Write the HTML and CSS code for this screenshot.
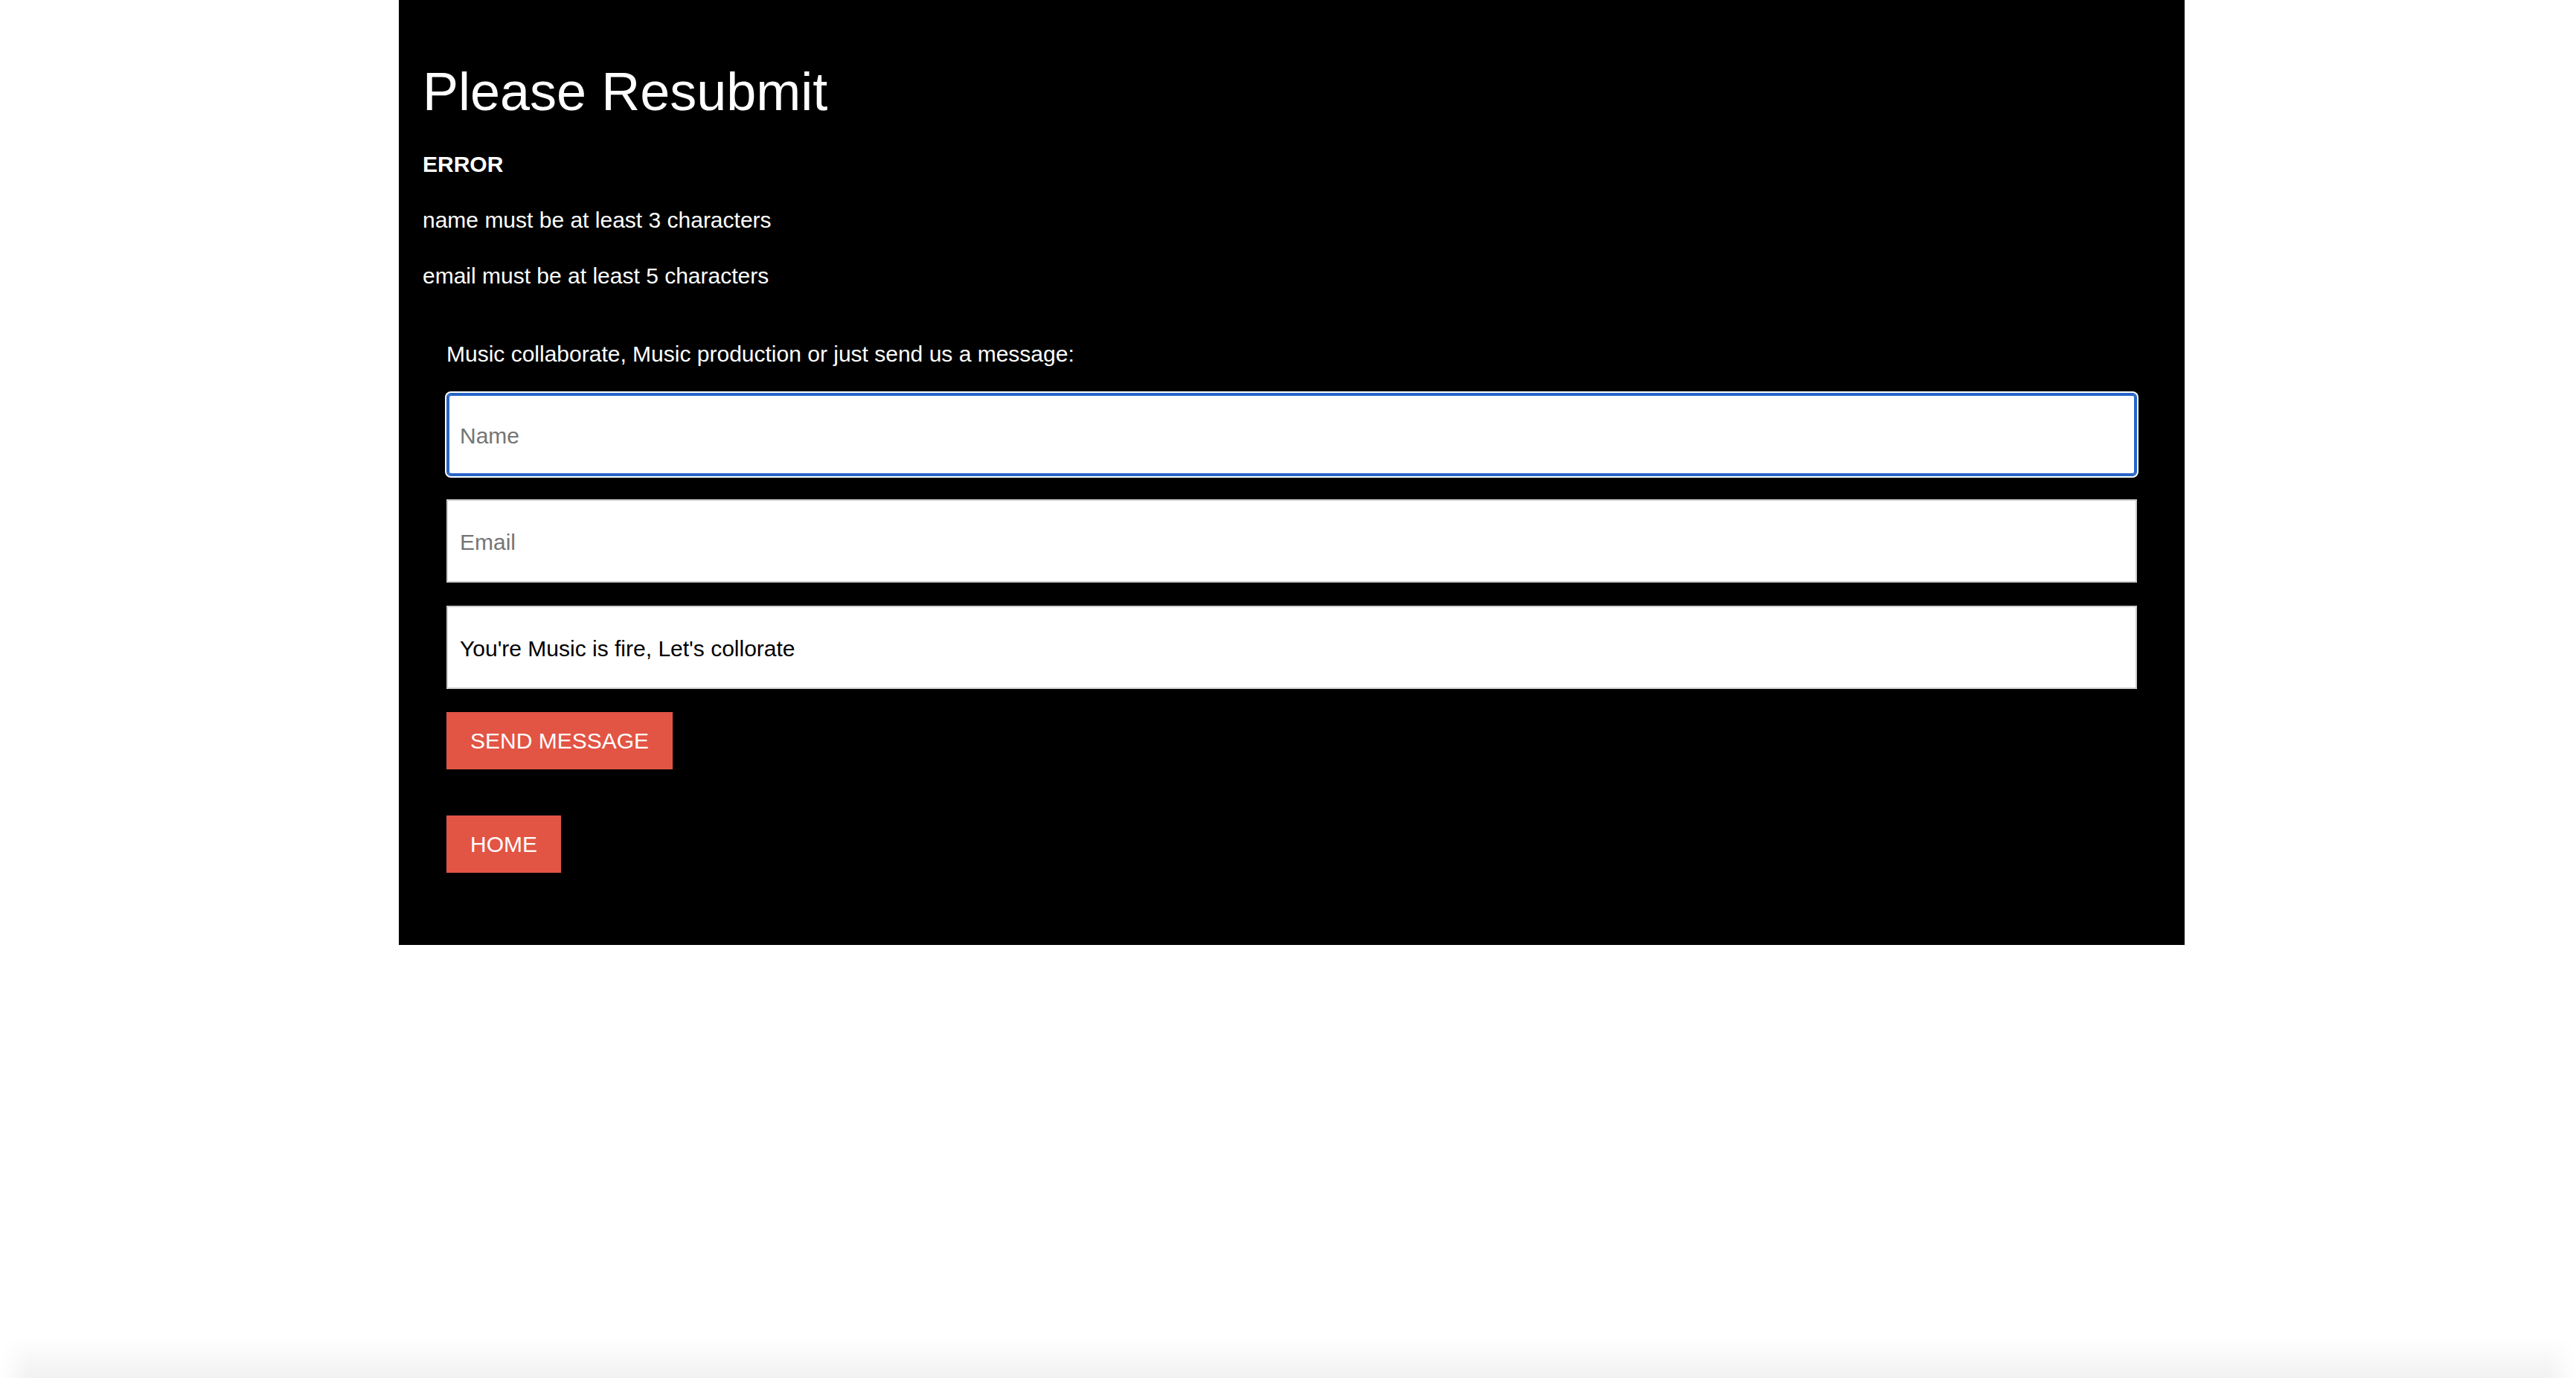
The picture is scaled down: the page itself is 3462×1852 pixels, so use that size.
FILE: index.html
```html
<!DOCTYPE html>
<html lang="en">
<head>
<meta charset="utf-8">
<title>Please Resubmit</title>
<link rel="stylesheet" href="styles.css">
</head>
<body>
<main class="panel">
  <h1 class="title">Please Resubmit</h1>
  <p class="error-title">ERROR</p>
  <p class="error-line">name must be at least 3 characters</p>
  <p class="error-line">email must be at least 5 characters</p>
  <form class="contact" action="#">
    <label class="intro" for="name">Music collaborate, Music production or just send us a message:</label>
    <input class="field field-focus" id="name" type="text" placeholder="Name">
    <input class="field" type="email" placeholder="Email">
    <input class="field" type="text" value="You're Music is fire, Let's collorate">
    <button class="btn" type="button">SEND MESSAGE</button>
    <div class="home-row"><a class="btn" href="#">HOME</a></div>
  </form>
</main>
<div class="bottom-shade"></div>
</body>
</html>
```

FILE: styles.css
```css
html, body {
  margin: 0;
  background: #ffffff;
}

body {
  padding: 0 0 0 10px;
  font-family: "Liberation Sans", Arial, Helvetica, sans-serif;
  font-size: 30px;
  line-height: 45px;
  color: #ffffff;
}

.panel {
  width: 2400px;
  box-sizing: border-box;
  margin: 0 auto;
  background: #000000;
  padding: 32px 32px 97px 32px;
}

.title {
  margin: 48px 0 32px;
  font-size: 72px;
  line-height: 86px;
  font-weight: 400;
}

.error-title {
  margin: 30px 0;
  font-weight: 700;
}

.error-line {
  margin: 30px 0;
}

.contact {
  display: flex;
  flex-direction: column;
  align-items: flex-start;
  padding: 30px 32px 0;
}

.intro {
  display: block;
  margin-bottom: 30px;
}

.field {
  display: block;
  width: 100%;
  height: 112px;
  box-sizing: border-box;
  margin: 0 0 31px;
  padding: 4px 16px 0;
  border: 2px solid #cccccc;
  border-radius: 0;
  background: #ffffff;
  font-family: "Liberation Sans", Arial, Helvetica, sans-serif;
  font-size: 30px;
  color: #000000;
  outline: none;
}

.field::placeholder {
  color: #757575;
}

.field-focus {
  border-color: #2764c8;
  border-radius: 6px;
  box-shadow: 0 0 0 2px #ffffff, inset 0 0 0 2px #2764c8;
}

.btn {
  display: inline-block;
  margin: 0;
  padding: 16px 32px;
  border: 0;
  border-radius: 0;
  background: #e25444;
  color: #ffffff;
  font-family: "Liberation Sans", Arial, Helvetica, sans-serif;
  font-size: 30px;
  line-height: 45px;
  text-decoration: none;
  cursor: pointer;
}

.home-row {
  margin-top: 62px;
}

.bottom-shade {
  position: fixed;
  left: 0;
  right: 0;
  bottom: 0;
  height: 56px;
  pointer-events: none;
  background: linear-gradient(to bottom, rgba(0, 0, 0, 0), rgba(0, 0, 0, 0.055));
  -webkit-mask-image: linear-gradient(to right, transparent 0, #000 40px, #000 calc(100% - 40px), transparent 100%);
  mask-image: linear-gradient(to right, transparent 0, #000 40px, #000 calc(100% - 40px), transparent 100%);
}
```
